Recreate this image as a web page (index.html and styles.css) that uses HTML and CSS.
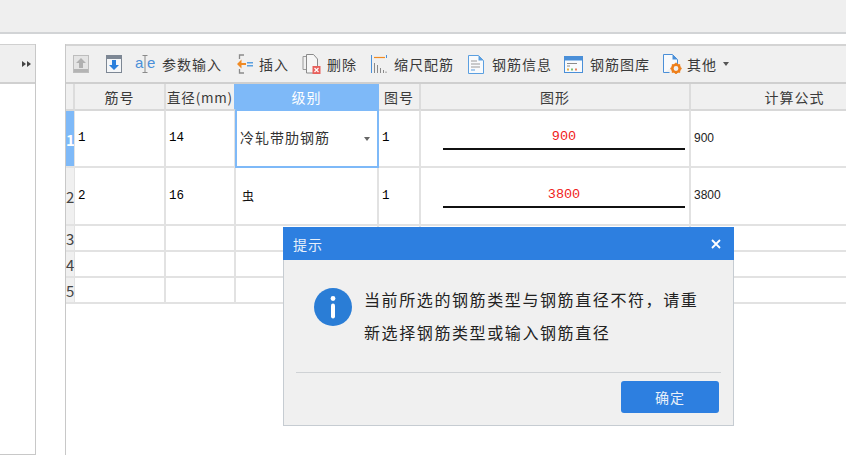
FILE: index.html
```html
<!DOCTYPE html>
<html lang="zh">
<head>
<meta charset="utf-8">
<title>钢筋</title>
<link rel="stylesheet" href="styles.css">
</head>
<body>
<div class="topbar"></div>
<div class="main">
  <aside class="side">
    <div class="side-head"><span class="side-arrows"><i></i><i></i></span></div>
    <div class="side-body"></div>
  </aside>
  <section class="panel">
    <div class="toolbar">
      <svg class="ic i-up" width="16" height="18" viewBox="0 0 16 18"><rect x=".5" y=".5" width="15" height="17" fill="#e4e4e4" stroke="#bdbdbd"/><rect x="1" y="14" width="14" height="3" fill="#b4b4b4"/><path d="M8 3l5 5h-3v5H6V8H3z" fill="#b0b0b0"/></svg>
      <svg class="ic i-down" width="16" height="18" viewBox="0 0 16 18"><rect x=".5" y=".5" width="15" height="17" fill="#f4f6f8" stroke="#7d8794"/><rect x="1" y="1" width="14" height="3" fill="#7d8794"/><path d="M8 15l-5-5h3V5h4v5h3z" fill="#2a7fdc"/></svg>
      <svg class="ic i-ae" width="20" height="20" viewBox="0 0 20 20"><text class="ae" x="0" y="14">a</text><text class="ae" x="12" y="14">e</text><path d="M7.500 1.500h5M7.500 18.500h5M10 1.500v17" stroke="#8a8a8a" fill="none"/></svg>
      <span class="tl t-ae">参数输入</span>
      <svg class="ic i-ins" width="16" height="20" viewBox="0 0 16 20"><path d="M7 1H2.500v4M2.500 15v4H7" stroke="#8a8a8a" stroke-width="1.300" fill="none"/><path d="M0 10l4.500-4.500V9H9v2H4.500v3.500z" fill="#f08a24"/><path d="M10 8h6v1.600h-6zM10 11h6v1.600h-6z" fill="#5b9fe0"/></svg>
      <span class="tl t-ins">插入</span>
      <svg class="ic i-del" width="19" height="20" viewBox="0 0 19 20"><path d="M5 2.500H1v13h3" fill="none" stroke="#9a9a9a"/><path d="M4.500.5h7l4 4.500v8h-3v6h-8z" fill="#f6f6f6" stroke="#8a8a8a"/><rect x="10.500" y="12" width="8" height="8" fill="#e8605c"/><path d="M12.500 14l4 4M16.500 14l-4 4" stroke="#fff" stroke-width="1.200"/></svg>
      <span class="tl t-del">删除</span>
      <svg class="ic i-scale" width="16" height="20" viewBox="0 0 16 20"><path d="M.5 1v18" stroke="#4a90d9"/><path d="M15.500 1v3" stroke="#4a90d9"/><path d="M3 3.500h11" stroke="#f08a24" stroke-width="1.200"/><path d="M3.500 9v10M6.500 11v8M9.500 14v5M12.500 16v3M15 17.500v1.500" stroke="#8a8a8a"/></svg>
      <span class="tl t-scale">缩尺配筋</span>
      <svg class="ic i-info" width="16" height="19" viewBox="0 0 16 19"><path d="M.5.5h10l5 5v13H.5z" fill="#f8fafc" stroke="#5b9fe0"/><path d="M10.500.5v5h5z" fill="#5b9fe0"/><path d="M3 6h6M3 9h9M3 12h9" stroke="#9a9a9a"/><path d="M3 15h4" stroke="#5b9fe0"/></svg>
      <span class="tl t-info">钢筋信息</span>
      <svg class="ic i-lib" width="19" height="17" viewBox="0 0 19 17"><rect x=".5" y=".5" width="18" height="16" fill="#f8fafc" stroke="#4a8fd8"/><rect x="1" y="1" width="17" height="3.500" fill="#4a8fd8"/><path d="M3 7.500h10M3 10h3" stroke="#8a8a8a"/><path d="M3 13.500h2" stroke="#e8b040" stroke-width="2"/><path d="M7 13.500h2" stroke="#7cc070" stroke-width="2"/><path d="M11 13.500h2" stroke="#e88060" stroke-width="2"/></svg>
      <span class="tl t-lib">钢筋图库</span>
      <svg class="ic i-other" width="19" height="20" viewBox="0 0 19 20"><path d="M.5 18.500V.5h9l5 5v5" fill="#f8fafc" stroke="#4a8fd8"/><path d="M.5 18.500h6" stroke="#4a8fd8"/><path d="M9.500.5v5h5z" fill="#4a8fd8"/><circle cx="13" cy="14.500" r="3.700" fill="none" stroke="#ee7f1a" stroke-width="2.600"/><path d="M13 8.800v2M13 18.200v2M7.300 14.500h2M16.700 14.500h2M9 10.500l1.400 1.400M15.600 17.100l1.400 1.400M17 10.500l-1.400 1.400M10.400 17.100L9 18.500" stroke="#ee7f1a" stroke-width="1.600"/></svg>
      <span class="tl t-other">其他</span>
      <span class="caret"></span>
    </div>
    <table class="grid">
      <colgroup>
        <col class="c0"><col class="c1"><col class="c2"><col class="c3"><col class="c4"><col class="c5"><col class="c6">
      </colgroup>
      <thead>
        <tr class="r-head">
          <th></th><th>筋号</th><th class="tight">直径(mm)</th><th class="sel-head">级别</th><th>图号</th><th>图形</th><th>计算公式</th>
        </tr>
      </thead>
      <tbody>
        <tr class="r-big r-first">
          <td class="rh rh-sel">1</td><td class="num">1</td><td class="num">14</td>
          <td class="sel-cell"><div class="combo"><span>冷轧带肋钢筋</span><i class="combo-caret"></i></div></td>
          <td class="num">1</td>
          <td class="shape-cell"><div class="shape"><span class="len">900</span></div></td>
          <td class="formula">900</td>
        </tr>
        <tr class="r-big">
          <td class="rh">2</td><td class="num">2</td><td class="num">16</td>
          <td class="grade">虫</td>
          <td class="num">1</td>
          <td class="shape-cell"><div class="shape"><span class="len">3800</span></div></td>
          <td class="formula">3800</td>
        </tr>
        <tr class="r-small"><td class="rh">3</td><td></td><td></td><td></td><td></td><td></td><td></td></tr>
        <tr class="r-small"><td class="rh">4</td><td></td><td></td><td></td><td></td><td></td><td></td></tr>
        <tr class="r-small"><td class="rh">5</td><td></td><td></td><td></td><td></td><td></td><td></td></tr>
      </tbody>
    </table>
  </section>
</div>
<div class="dialog">
  <div class="d-title"><span>提示</span>
    <svg width="10" height="10" viewBox="0 0 10 10"><path d="M1 1l8 8M9 1l-8 8" stroke="#fff" stroke-width="1.800"/></svg>
  </div>
  <div class="d-body">
    <svg class="d-icon" width="38" height="38" viewBox="0 0 38 38"><circle cx="19" cy="19" r="19" fill="#2a7dd6"/><circle cx="19" cy="10.500" r="2.400" fill="#fff"/><rect x="17" y="15.500" width="4" height="15" rx="2" fill="#fff"/></svg>
    <p class="d-msg">当前所选的钢筋类型与钢筋直径不符，请重新选择钢筋类型或输入钢筋直径</p>
  </div>
  <div class="d-foot"><button class="d-btn">确定</button></div>
</div>
</body>
</html>
```
FILE: styles.css
```css
* { box-sizing: border-box; }
html, body { margin: 0; height: 100%; }
body {
  width: 846px;
  height: 455px;
  overflow: hidden;
  position: relative;
  background: #fff;
  font-family: "Noto Sans CJK SC", "Liberation Sans", sans-serif;
  font-size: 14px;
  color: #333;
  display: flex;
  flex-direction: column;
}
.topbar {
  height: 34px;
  flex: none;
  background: #efefef;
  border-bottom: 2px solid #d2d4d6;
}
.main {
  flex: 1;
  display: flex;
  padding-top: 10px;
  min-height: 0;
}
.side {
  width: 36px;
  flex: none;
  margin-right: 29px;
  display: flex;
  flex-direction: column;
  border-right: 1px solid #c8c8c8;
  border-bottom: 1px solid #c8c8c8;
}
.side-head {
  height: 40px;
  background: #efefef;
  border-top: 1px solid #d0d0d0;
  border-bottom: 2px solid #d0d0d0;
  display: flex;
  align-items: center;
  justify-content: flex-end;
  padding-right: 4px;
}
.side-arrows { display: flex; gap: 1px; }
.side-arrows i {
  border-left: 4px solid #444;
  border-top: 3px solid transparent;
  border-bottom: 3px solid transparent;
}
.side-body { flex: 1; background: #fff; }
.panel {
  flex: 1;
  min-width: 0;
  border-left: 1px solid #c8c8c8;
  overflow: hidden;
}
.toolbar {
  height: 40px;
  background: #f0f0f0;
  border-top: 2px solid #d4d4d4;
  border-bottom: 2px solid #cfcfcf;
  padding-left: 7px;
  display: flex;
  align-items: center;
}
.ic { flex: none; display: block; }
.ae { font: 15px "Liberation Sans", sans-serif; fill: #4a8fd8; }
.tl { letter-spacing: 1px; line-height: 20px; white-space: nowrap; color: #3a3a3a; }
.i-down { margin-left: 17px; }
.i-ae { margin-left: 13px; }
.t-ae { margin-left: 7px; }
.i-ins { margin-left: 15px; }
.t-ins { margin-left: 6px; }
.i-del { margin-left: 13px; }
.t-del { margin-left: 6px; }
.i-scale { margin-left: 14px; }
.t-scale { margin-left: 7px; }
.i-info { margin-left: 14px; }
.t-info { margin-left: 8px; }
.i-lib { margin-left: 12px; }
.t-lib { margin-left: 7px; }
.i-other { margin-left: 13px; }
.t-other { margin-left: 5px; }
.caret {
  margin-left: 6px;
  border-top: 4px solid #555;
  border-left: 3px solid transparent;
  border-right: 3px solid transparent;
}
.grid {
  border-collapse: separate;
  border-spacing: 0;
  table-layout: fixed;
  width: 834px;
}
.c0 { width: 9px; }
.c1 { width: 91px; }
.c2 { width: 70px; }
.c3 { width: 143px; }
.c4 { width: 42px; }
.c5 { width: 270px; }
.c6 { width: 209px; }
.grid th, .grid td {
  padding: 0;
  border-right: 2px solid #e2e2e2;
  border-bottom: 2px solid #e2e2e2;
  overflow: hidden;
  white-space: nowrap;
}
.grid th {
  background: #f0f0f0;
  font-weight: 400;
  letter-spacing: 1px;
  text-align: center;
  color: #3a3a3a;
  line-height: 20px;
  border-bottom: 1px solid #d8d8d8;
  border-right-color: #dcdcdc;
}
.grid th.tight {
  letter-spacing: .8px;
  font-size: 13.500px;
  border-right-color: #7eb9f8;
}
.r-head { height: 26px; }
.r-big { height: 58px; }
.r-small { height: 26px; }
.r-first td { border-top: 1px solid #d8d8d8; }
.grid th.sel-head {
  background: #7eb9f8;
  color: #fff;
  border-right-color: #7eb9f8;
  border-bottom-color: #7eb9f8;
}
.grid .rh {
  background: #f0f0f0;
  text-align: center;
  font-size: 15px;
  line-height: 14px;
  padding-top: 2px;
  color: #444;
  border-right-width: 1px;
}
.grid .rh-sel { background: #7eb9f8; color: #fff; font-weight: 700; }
.grid .num {
  font: 12.500px/14px "Liberation Mono", monospace;
  color: #000;
  padding: 0 0 1px 3px;
}
.grid .formula {
  font: 12px/14px "Liberation Sans", sans-serif;
  color: #222;
  padding: 0 0 2px 3px;
}
.r-first .sel-cell, .grid .sel-cell { padding: 0; border: 0; overflow: visible; }
.combo {
  height: 58px;
  margin-left: -1px;
  border: 2px solid #7eb9f8;
  border-top-width: 1px;
  padding-left: 3px;
  display: flex;
  align-items: center;
  justify-content: space-between;
  letter-spacing: 1px;
  color: #333;
}
.combo span { margin-bottom: 3px; }
.combo-caret {
  margin-right: 7px;
  border-top: 4px solid #666;
  border-left: 3.500px solid transparent;
  border-right: 3.500px solid transparent;
}
.grid .grade { padding: 0 0 2px 6px; font-size: 12px; color: #111; }
.shape-cell { vertical-align: bottom; }
.shape {
  margin: 0 4px 16px 22px;
  height: 36px;
  border-bottom: 2px solid #111;
  display: flex;
  align-items: flex-end;
  justify-content: center;
  padding-bottom: 3px;
}
.len {
  font: 13.500px/16px "Liberation Mono", monospace;
  color: #f01c20;
}
.dialog {
  position: absolute;
  left: 283px;
  top: 227px;
  width: 451px;
  height: 199px;
  background: #f0f0f0;
  border: 1px solid #c6ccd2;
  border-top: 0;
  display: flex;
  flex-direction: column;
}
.d-title {
  height: 33px;
  flex: none;
  margin: 0 -1px;
  background: #2d7fe0;
  color: #e8f0fa;
  display: flex;
  align-items: center;
  justify-content: space-between;
  padding: 0 13px 0 10px;
  letter-spacing: 1px;
}
.d-body {
  flex: 1;
  margin: 0 12px;
  padding: 28px 0 0 18px;
  border-bottom: 1px solid #cfd2d5;
  display: flex;
  align-items: flex-start;
}
.d-icon { flex: none; margin-right: 12px; }
.d-msg {
  margin: -5px 0 0;
  width: 342px;
  font-size: 16px;
  letter-spacing: 1.600px;
  line-height: 33px;
  color: #222;
}
.d-foot {
  height: 52px;
  flex: none;
  display: flex;
  justify-content: flex-end;
  padding: 8px 14px 0 0;
  align-items: flex-start;
}
.d-btn {
  width: 98px;
  height: 32px;
  padding: 0;
  background: #2d7fe0;
  color: #e8f0fa;
  border: 0;
  border-radius: 3px;
  font: inherit;
  letter-spacing: 1px;
}
```
